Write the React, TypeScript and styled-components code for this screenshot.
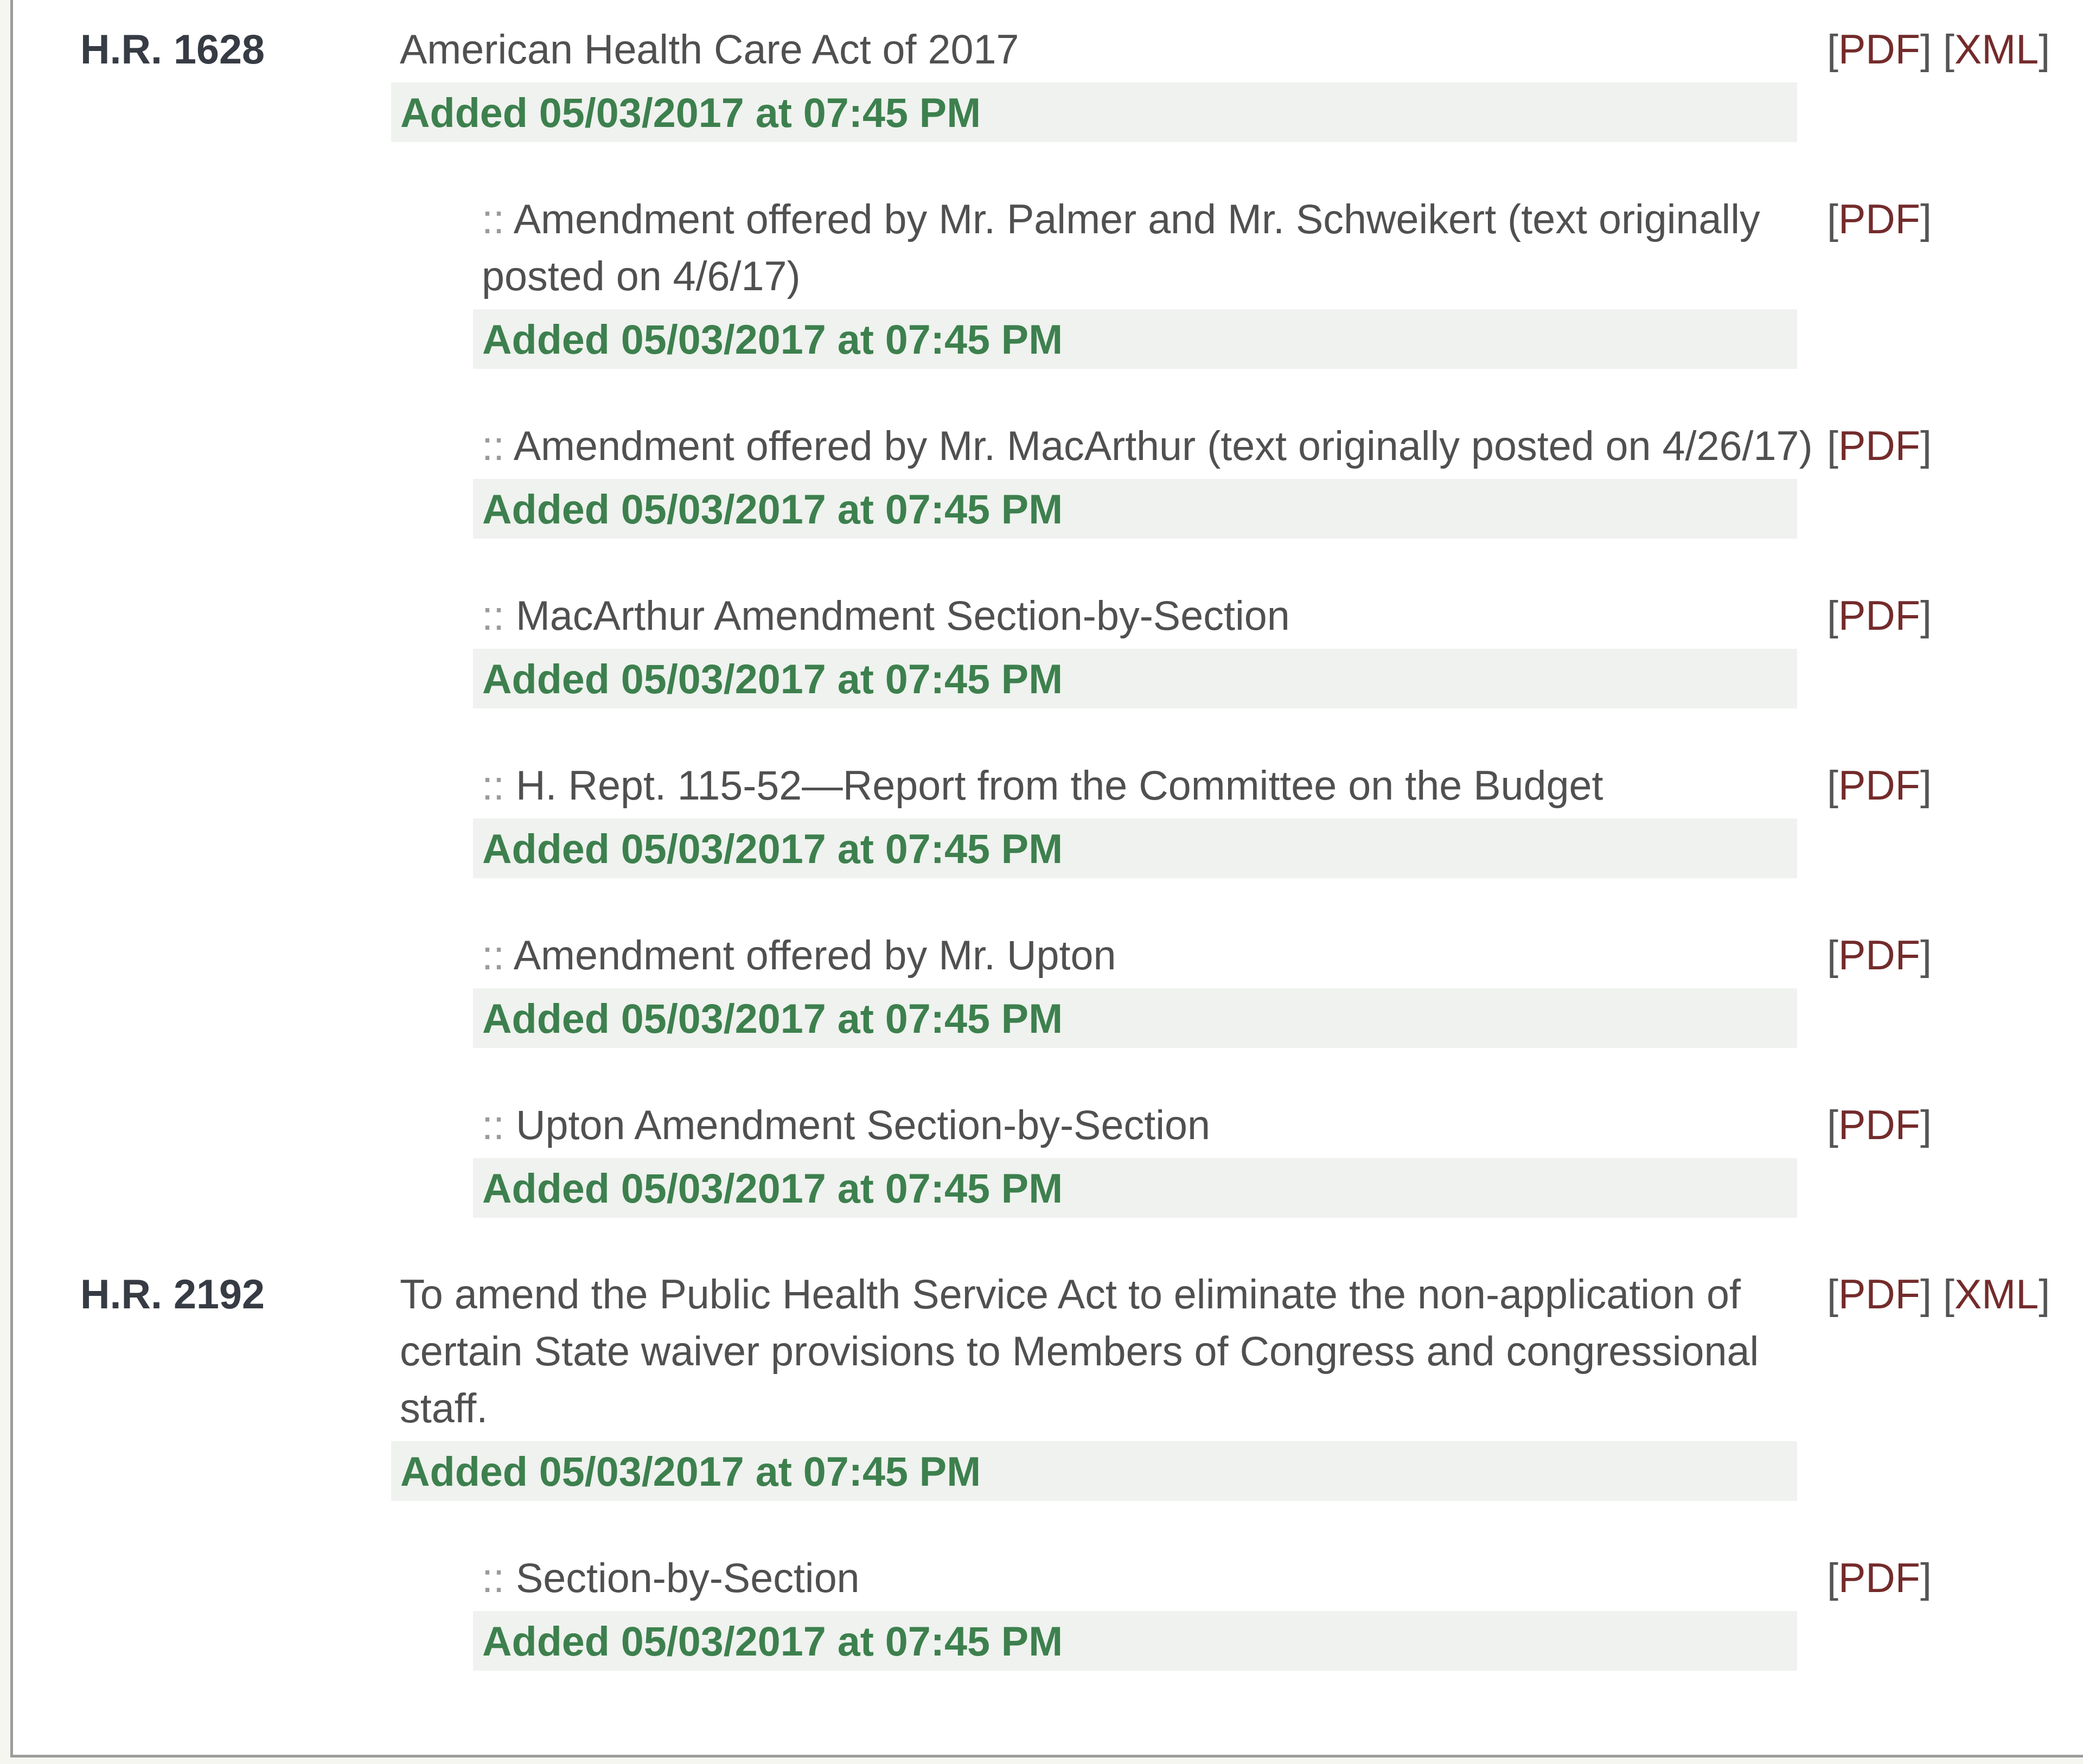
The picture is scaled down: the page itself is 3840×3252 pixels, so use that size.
import styled, { createGlobalStyle } from 'styled-components';

const GlobalStyle = createGlobalStyle`
  body {
    margin: 0;
    background: #f6f6f1;
    font-family: "Liberation Sans", Arial, sans-serif;
    overflow-x: hidden;
  }
`;

const Page = styled.div`
  padding: 0 0 9px 19px;
`;

const Panel = styled.div`
  background: #ffffff;
  border-left: 5px solid #9c9c9c;
  border-bottom: 5px solid #9c9c9c;
  padding: 39px 0 155px 0;
  display: flex;
  flex-direction: column;
  gap: 89px;
`;

const BillRow = styled.div`
  display: grid;
  grid-template-columns: 697px 1fr;
`;

const BillNumber = styled.div`
  padding-left: 124px;
  font-size: 75.5px;
  line-height: 105px;
  font-weight: bold;
  color: #363b44;
`;

const Entries = styled.div`
  display: flex;
  flex-direction: column;
  gap: 90px;
`;

const Entry = styled.div<{ $sub?: boolean }>`
  display: grid;
  grid-template-columns: 1fr 472px;
  padding-left: ${(p) => (p.$sub ? '151px' : '0')};
`;

const EntryBody = styled.div`
  display: flex;
  flex-direction: column;
`;

const Title = styled.div`
  padding-left: 16px;
  font-size: 75.5px;
  line-height: 105px;
  color: #505050;
`;

const Bullet = styled.span`
  color: #9a9a9a;
`;

const Stamp = styled.div`
  margin: 8px 55px 0 0;
  height: 110px;
  padding-left: 17px;
  background: #eff2ee;
  font-size: 75.5px;
  line-height: 112px;
  font-weight: bold;
  color: #3d804e;
  white-space: nowrap;
`;

const Links = styled.div`
  font-size: 75.5px;
  line-height: 105px;
  color: #555555;
  white-space: nowrap;
`;

const DocLink = styled.a`
  color: #742b2b;
  text-decoration: none;
`;

type Item = { text: string; xml?: boolean };
type Bill = { number: string; title: Item; subs: Item[] };

const STAMP = 'Added 05/03/2017 at 07:45 PM';

const bills: Bill[] = [
  {
    number: 'H.R. 1628',
    title: { text: 'American Health Care Act of 2017', xml: true },
    subs: [
      { text: 'Amendment offered by Mr. Palmer and Mr. Schweikert (text originally posted on 4/6/17)' },
      { text: 'Amendment offered by Mr. MacArthur (text originally posted on 4/26/17)' },
      { text: 'MacArthur Amendment Section-by-Section' },
      { text: 'H. Rept. 115-52\u2014Report from the Committee on the Budget' },
      { text: 'Amendment offered by Mr. Upton' },
      { text: 'Upton Amendment Section-by-Section' },
    ],
  },
  {
    number: 'H.R. 2192',
    title: {
      text: 'To amend the Public Health Service Act to eliminate the non-application of certain State waiver provisions to Members of Congress and congressional staff.',
      xml: true,
    },
    subs: [{ text: 'Section-by-Section' }],
  },
];

const DocLinks = ({ xml }: { xml?: boolean }) => (
  <Links>
    [<DocLink href="#">PDF</DocLink>]
    {xml && (
      <>
        {' '}[<DocLink href="#">XML</DocLink>]
      </>
    )}
  </Links>
);

const EntryRow = ({ item, sub }: { item: Item; sub?: boolean }) => (
  <Entry $sub={sub}>
    <EntryBody>
      <Title>
        {sub && <Bullet>:: </Bullet>}
        {item.text}
      </Title>
      <Stamp>{STAMP}</Stamp>
    </EntryBody>
    <DocLinks xml={item.xml} />
  </Entry>
);

const App = () => {
  return (
    <>
      <GlobalStyle />
      <Page>
        <Panel>
          {bills.map((bill) => (
            <BillRow key={bill.number}>
              <BillNumber>{bill.number}</BillNumber>
              <Entries>
                <EntryRow item={bill.title} />
                {bill.subs.map((s, i) => (
                  <EntryRow key={i} item={s} sub />
                ))}
              </Entries>
            </BillRow>
          ))}
        </Panel>
      </Page>
    </>
  );
};

export default App;
